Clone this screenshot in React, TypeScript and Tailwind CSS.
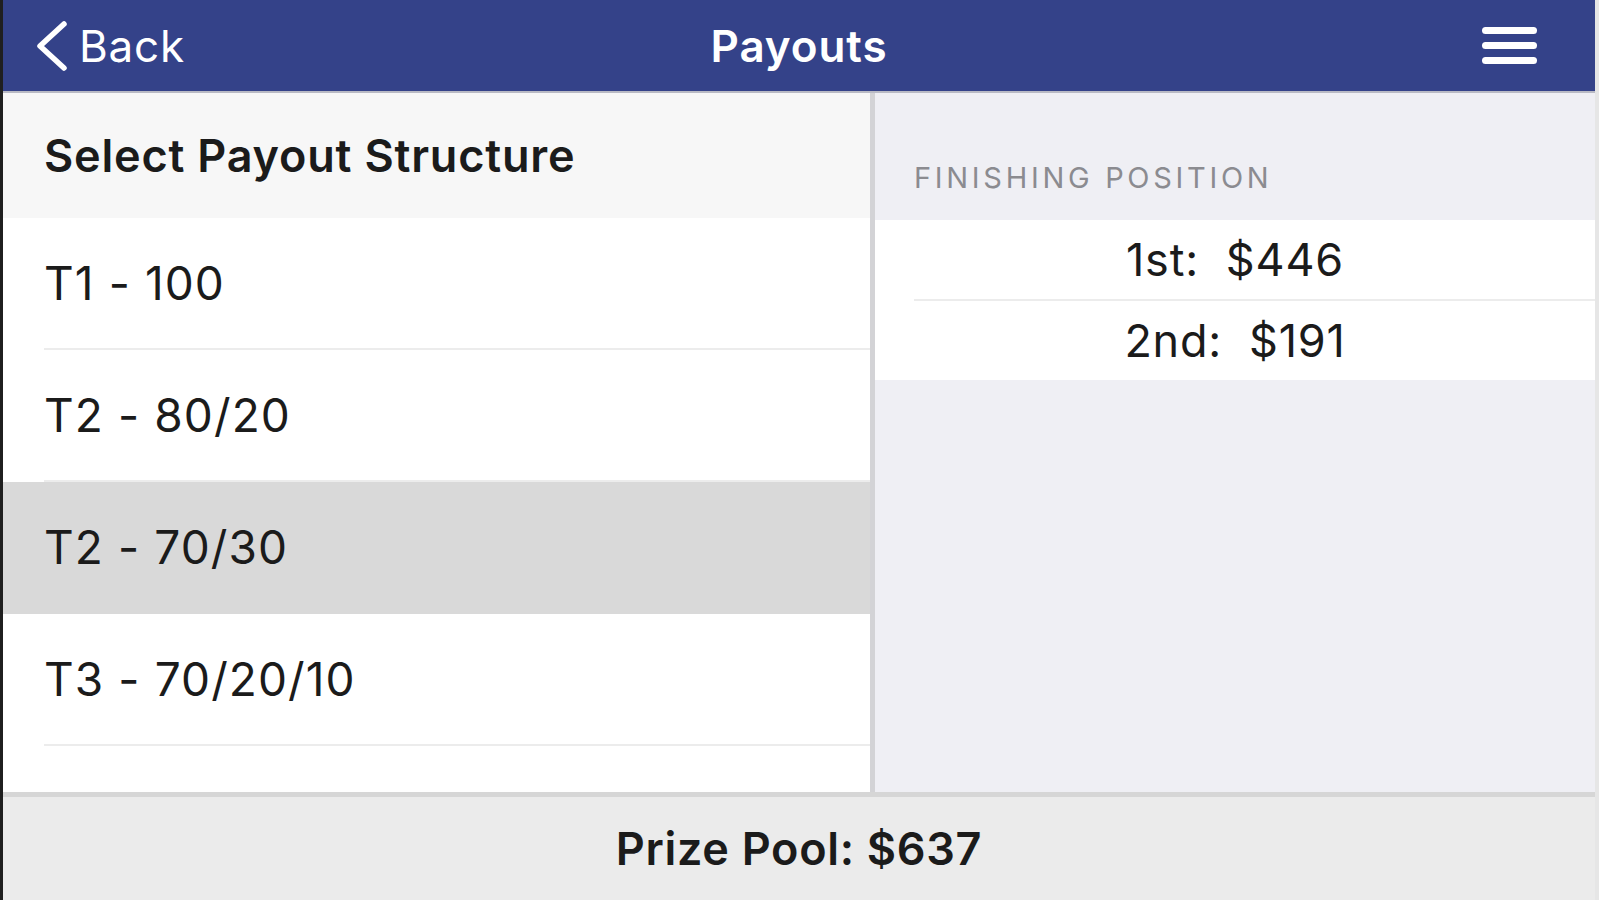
import React from 'react';

const structures = [
  { label: 'T1 - 100', selected: false },
  { label: 'T2 - 80/20', selected: false },
  { label: 'T2 - 70/30', selected: true },
  { label: 'T3 - 70/20/10', selected: false },
];

const payouts = [
  { place: '1st:', amount: '$446' },
  { place: '2nd:', amount: '$191' },
];

function BackChevron() {
  return (
    <svg width="34" height="52" viewBox="0 0 34 52" fill="none">
      <polyline
        points="29,4 5,26 29,48"
        stroke="white"
        strokeWidth="5.5"
        strokeLinecap="round"
        strokeLinejoin="round"
      />
    </svg>
  );
}

function Hamburger() {
  return (
    <div className="flex flex-col gap-[8px]">
      <span className="block w-[55px] h-[7px] rounded-full bg-white" />
      <span className="block w-[55px] h-[7px] rounded-full bg-white" />
      <span className="block w-[55px] h-[7px] rounded-full bg-white" />
    </div>
  );
}

export default function App() {
  return (
    <div
      className="w-[1599px] h-[900px] flex flex-col overflow-hidden bg-white border-l-[3px] border-[#1f1f1f] border-r-[4px] border-r-[#e6e6e6] text-[#1b1b1b]"
      style={{ fontFamily: 'Inter, "Liberation Sans", Arial, sans-serif' }}
    >
      {/* nav bar */}
      <header className="h-[91px] shrink-0 bg-[#344289] grid grid-cols-[1fr_auto_1fr] items-center text-white">
        <div className="flex items-center pl-[32px] gap-[10px]">
          <BackChevron />
          <span className="text-[44px] leading-none tracking-[0.8px]">Back</span>
        </div>
        <h1 className="text-[44px] leading-none font-semibold tracking-[0.9px]">Payouts</h1>
        <div className="flex justify-end pr-[58px]">
          <Hamburger />
        </div>
      </header>
      <div className="h-[2px] shrink-0 bg-[#b9bac4]" />

      {/* body */}
      <div className="flex flex-1 min-h-0">
        {/* structure list */}
        <section className="w-[867px] shrink-0 flex flex-col bg-white">
          <div className="h-[125px] shrink-0 flex items-center pl-[41px] bg-[#f7f7f7]">
            <h2 className="text-[45px] leading-none font-semibold tracking-[0.8px]">Select Payout Structure</h2>
          </div>
          {structures.map((s) => (
            <div key={s.label} className={s.selected ? 'bg-[#d9d9d9]' : 'bg-white'}>
              <div className="h-[130px] flex items-center pl-[41px]">
                <span className="text-[46px] leading-none tracking-[1.1px]">{s.label}</span>
              </div>
              <div className={s.selected ? 'h-[2px]' : 'h-[2px] ml-[41px] bg-[#ececec]'} />
            </div>
          ))}
        </section>

        <div className="w-[5px] shrink-0 bg-[#d3d3d6]" />

        {/* finishing positions */}
        <section className="flex-1 flex flex-col bg-[#efeff4]">
          <div className="h-[127px] shrink-0 flex items-end pl-[39px] pb-[28px]">
            <span className="text-[29px] leading-none uppercase tracking-[3.7px] text-[#8b8b90]">Finishing Position</span>
          </div>
          <div className="bg-white">
            {payouts.map((p, i) => (
              <div key={p.place}>
                <div className="h-[79px] flex items-center justify-center">
                  <span className="text-[45px] leading-none whitespace-pre tracking-[0.8px]">{p.place + '  ' + p.amount}</span>
                </div>
                {i < payouts.length - 1 && <div className="h-[2px] ml-[39px] bg-[#ececec]" />}
              </div>
            ))}
          </div>
        </section>
      </div>

      {/* prize pool footer */}
      <footer className="h-[108px] shrink-0 flex items-center justify-center bg-[#ebebeb] border-t-[5px] border-[#d6d6d6]">
        <span className="text-[45px] leading-none font-semibold tracking-[0.7px]">Prize Pool: $637</span>
      </footer>
    </div>
  );
}
